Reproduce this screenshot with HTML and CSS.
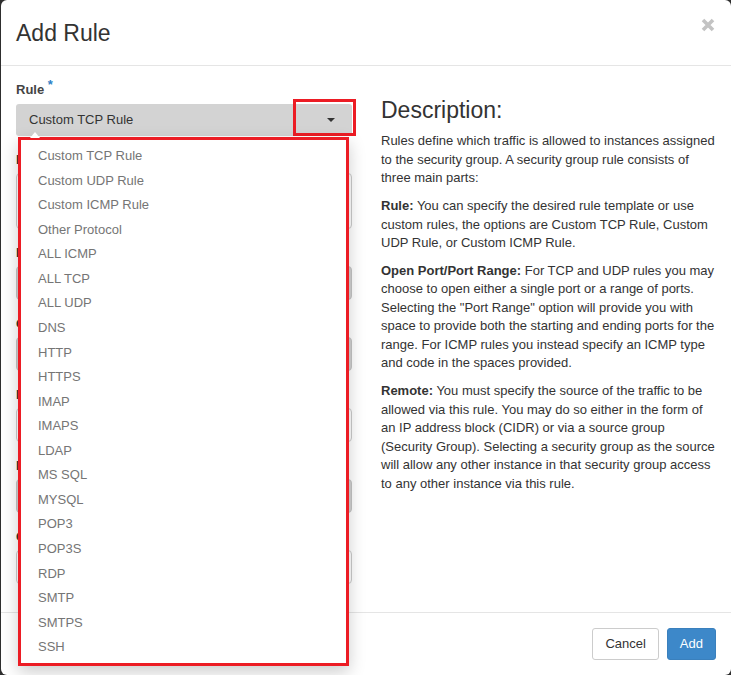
FILE: index.html
```html
<!DOCTYPE html>
<html>
<head>
<meta charset="utf-8">
<link rel="stylesheet" href="styles.css">
</head>
<body>
<div class="modal">
  <div class="modal-header">
    <h4 class="modal-title">Add Rule</h4>
    <span class="close"><svg width="14" height="14" viewBox="0 0 14 14"><path d="M2 2 L12 12 M12 2 L2 12" stroke="#c3c3c3" stroke-width="3.6" fill="none"/></svg></span>
  </div>
  <div class="modal-body">
    <div class="form-col">
      <div class="group">
        <div class="lbl-main">Rule <span class="req">*</span></div>
        <div class="select-wrap">
          <div class="select">Custom TCP Rule<span class="caret"></span></div>
          <div class="hl-caret"></div>
          <span class="notch"></span>
          <ul class="menu">
            <li>Custom TCP Rule</li>
            <li>Custom UDP Rule</li>
            <li>Custom ICMP Rule</li>
            <li>Other Protocol</li>
            <li>ALL ICMP</li>
            <li>ALL TCP</li>
            <li>ALL UDP</li>
            <li>DNS</li>
            <li>HTTP</li>
            <li>HTTPS</li>
            <li>IMAP</li>
            <li>IMAPS</li>
            <li>LDAP</li>
            <li>MS SQL</li>
            <li>MYSQL</li>
            <li>POP3</li>
            <li>POP3S</li>
            <li>RDP</li>
            <li>SMTP</li>
            <li>SMTPS</li>
            <li>SSH</li>
          </ul>
        </div>
      </div>
      <div class="group">
        <div class="lbl">Description</div>
        <div class="ctrl textarea"></div>
      </div>
      <div class="group">
        <div class="lbl">Direction</div>
        <div class="ctrl gray"></div>
      </div>
      <div class="group">
        <div class="lbl">Open Port</div>
        <div class="ctrl gray"></div>
      </div>
      <div class="group">
        <div class="lbl">Port</div>
        <div class="ctrl"></div>
      </div>
      <div class="group">
        <div class="lbl">Remote</div>
        <div class="ctrl gray"></div>
      </div>
      <div class="group">
        <div class="lbl">CIDR</div>
        <div class="ctrl"></div>
      </div>
    </div>
    <div class="desc-col">
      <h3 class="desc-title">Description:</h3>
      <p>Rules define which traffic is allowed to instances assigned to the security group. A security group rule consists of three main parts:</p>
      <p><b>Rule:</b> You can specify the desired rule template or use custom rules, the options are Custom TCP Rule, Custom UDP Rule, or Custom ICMP Rule.</p>
      <p><b>Open Port/Port Range:</b> For TCP and UDP rules you may choose to open either a single port or a range of ports. Selecting the "Port Range" option will provide you with space to provide both the starting and ending ports for the range. For ICMP rules you instead specify an ICMP type and code in the spaces provided.</p>
      <p><b>Remote:</b> You must specify the source of the traffic to be allowed via this rule. You may do so either in the form of an IP address block (CIDR) or via a source group (Security Group). Selecting a security group as the source will allow any other instance in that security group access to any other instance via this rule.</p>
    </div>
  </div>
  <div class="modal-footer">
    <span class="btn">Cancel</span>
    <span class="btn primary">Add</span>
  </div>
</div>
</body>
</html>
```
FILE: styles.css
```css
html, body {
  margin: 0;
  padding: 0;
  overflow: hidden;
  background: #2e2e2e;
}
body {
  font-family: "Liberation Sans", Arial, sans-serif;
  font-size: 13px;
  color: #333;
  line-height: 1.42857;
}
.modal {
  margin-left: 1px;
  width: 730px;
  height: 675px;
  background: #fff;
  border-radius: 6px;
  overflow: hidden;
  display: flex;
  flex-direction: column;
}
.modal-header {
  display: flex;
  justify-content: space-between;
  align-items: flex-start;
  padding: 17px 16px 15px 15px;
  border-bottom: 1px solid #e5e5e5;
}
.modal-title {
  margin: 0;
  font-size: 23px;
  font-weight: normal;
  line-height: 33px;
  color: #333;
}
.close {
  display: block;
  margin-top: 1px;
  width: 14px;
  height: 14px;
}
.close svg { display: block; }
.modal-body {
  flex: 1;
  display: grid;
  grid-template-columns: 336px 335px;
  column-gap: 29px;
  padding: 14px 15px 0 15px;
  position: relative;
}
.group {
  margin-bottom: 15px;
}
.lbl-main {
  font-weight: bold;
  height: 19px;
  line-height: 19px;
  margin-bottom: 5px;
  color: #444;
}
.req {
  color: #2d7fc6;
  font-size: 13px;
  position: relative;
  top: -5px;
}
.select-wrap {
  position: relative;
}
.select {
  height: 32px;
  box-sizing: border-box;
  background: #d3d3d3;
  border-radius: 3px;
  padding-left: 13px;
  line-height: 32px;
  color: #333;
  position: relative;
}
.caret {
  position: absolute;
  left: 311px;
  top: 14px;
  width: 0;
  height: 0;
  border-top: 4px solid #333;
  border-left: 4px solid transparent;
  border-right: 4px solid transparent;
}
.hl-caret {
  position: absolute;
  left: 277px;
  top: -5px;
  width: 63px;
  height: 37px;
  box-sizing: border-box;
  border: 3px solid #ec1c24;
}
.notch {
  position: absolute;
  left: 14px;
  top: 28px;
  width: 0;
  height: 0;
  border-bottom: 6px solid #fff;
  border-left: 5px solid transparent;
  border-right: 5px solid transparent;
  z-index: 3;
}
.menu {
  position: absolute;
  left: 2px;
  top: 33px;
  width: 331px;
  height: 529px;
  box-sizing: border-box;
  margin: 0;
  padding: 4px 0 0 0;
  list-style: none;
  background: #fff;
  border: 3px solid #ec1c24;
  box-shadow: 0 6px 16px rgba(0, 0, 0, 0.2);
  z-index: 2;
}
.menu li {
  padding: 3px 0 3px 17px;
  line-height: 18.57px;
  color: #757575;
}
.lbl {
  font-weight: bold;
  height: 18px;
  line-height: 18px;
  margin-bottom: 4px;
}
.ctrl {
  height: 34px;
  box-sizing: border-box;
  border: 1px solid #ccc;
  border-radius: 4px;
  background: #fff;
}
.ctrl.gray {
  background: #d3d3d3;
  border-color: #c4c4c4;
}
.ctrl.textarea {
  height: 56px;
}
.desc-col {
  min-width: 0;
}
.desc-title {
  margin: 18px 0 9px 0;
  font-size: 23px;
  font-weight: normal;
  line-height: 1.1;
  color: #333;
}
.desc-col p {
  margin: 0 0 9px 0;
}
.desc-col b {
  font-weight: bold;
}
.modal-footer {
  display: flex;
  justify-content: flex-end;
  gap: 8px;
  padding: 15px;
  border-top: 1px solid #e5e5e5;
}
.btn {
  display: block;
  height: 32px;
  box-sizing: border-box;
  padding: 0 12px;
  line-height: 30px;
  border: 1px solid #ccc;
  border-radius: 3px;
  background: #fff;
  color: #333;
}
.btn.primary {
  background: #3d88c9;
  border-color: #3a80bd;
  color: #fff;
}
```
